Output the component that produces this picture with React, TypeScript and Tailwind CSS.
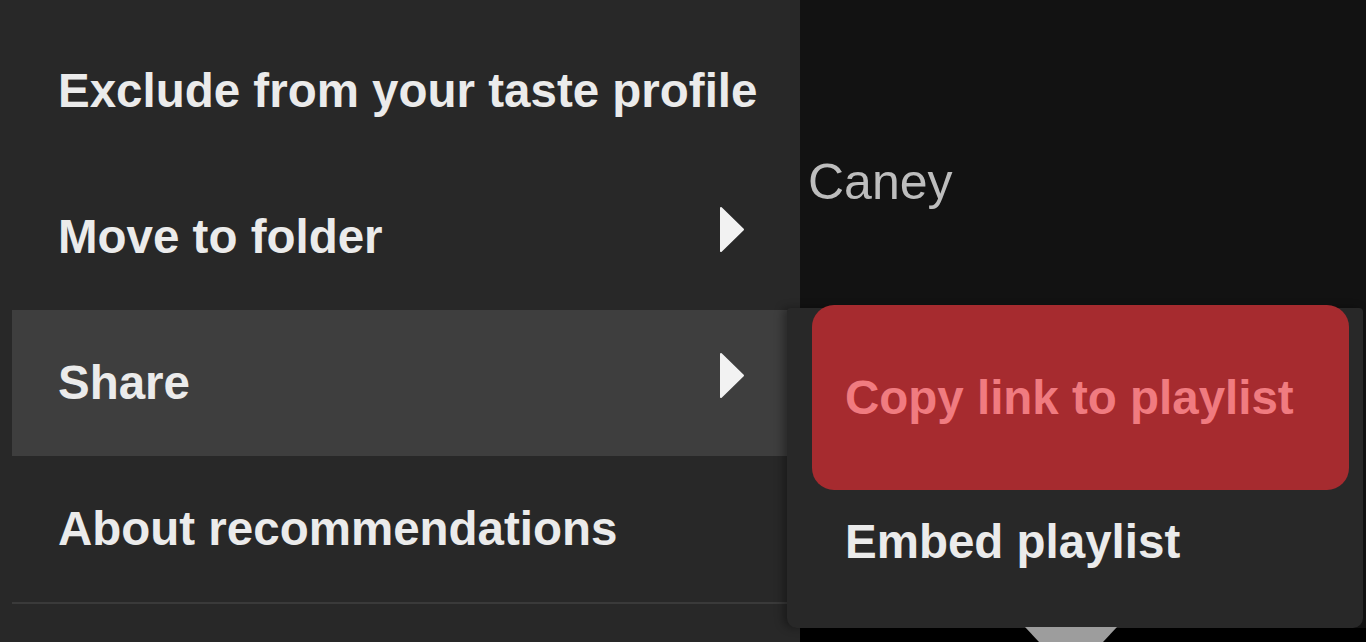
const menuItems = [
    { label: "Exclude from your taste profile", sub: false, active: false },
    { label: "Move to folder", sub: true, active: false },
    { label: "Share", sub: true, active: true },
    { label: "About recommendations", sub: false, active: false },
];

function Caret() {
    return (
        <svg width="26" height="47" viewBox="0 0 26 47" className="mb-[15px] shrink-0">
            <polygon points="2,2 24,23.5 2,45" fill="#f2f2f2" stroke="#f2f2f2" strokeWidth="2" strokeLinejoin="round" />
        </svg>
    );
}

export default function App() {
    return (
        <div
            className="relative flex h-[642px] w-[1366px] overflow-hidden bg-[#282828]"
            style={{ fontFamily: '"Liberation Sans", Arial, sans-serif' }}
        >
            {/* Main context menu */}
            <div className="w-[800px] shrink-0 bg-[#282828] px-[12px] pt-[18px]">
                {menuItems.map((item) => (
                    <div
                        key={item.label}
                        className={`flex h-[146px] items-center justify-between pl-[46px] pr-[43px] ${
                            item.active ? "bg-[#3e3e3e]" : ""
                        }`}
                    >
                        <span className="whitespace-nowrap text-[47.5px] font-bold leading-none text-[#ebebeb]">{item.label}</span>
                        {item.sub && <Caret />}
                    </div>
                ))}
                <div className="h-[2px] bg-[#3a3a3a]" />
            </div>

            {/* Background playlist area */}
            <div className="flex flex-1 flex-col">
                <div className="flex h-[628px] flex-col bg-[#121212]">
                    <div className="flex h-[364px] items-center pl-[8px]">
                        <span className="text-[50px] leading-none text-[#bdbdbd]">Caney</span>
                    </div>
                </div>
                <div className="h-[14px] bg-black" />
            </div>

            {/* Share submenu */}
            <div className="absolute left-[787px] top-[308px] flex h-[320px] w-[576px] flex-col rounded-b-[10px] rounded-t-[4px] bg-[#282828] shadow-[-4px_0_8px_rgba(0,0,0,0.35)]">
                <div className="-mt-[3px] ml-[25px] flex h-[185px] w-[537px] items-center rounded-[22px] bg-[#a62b2f] pl-[33px]">
                    <span className="whitespace-nowrap text-[47.5px] font-bold leading-none text-[#f07b80]">Copy link to playlist</span>
                </div>
                <div className="flex h-[103px] items-center pl-[58px]">
                    <span className="whitespace-nowrap text-[47.5px] font-bold leading-none text-[#ebebeb]">Embed playlist</span>
                </div>
            </div>

            {/* pointer below submenu */}
            <svg className="absolute left-[1022px] top-[627px]" width="98" height="15" viewBox="0 0 98 15">
                <polygon points="3,0 95,0 81,15 17,15" fill="#9d9d9d" />
            </svg>
        </div>
    );
}
